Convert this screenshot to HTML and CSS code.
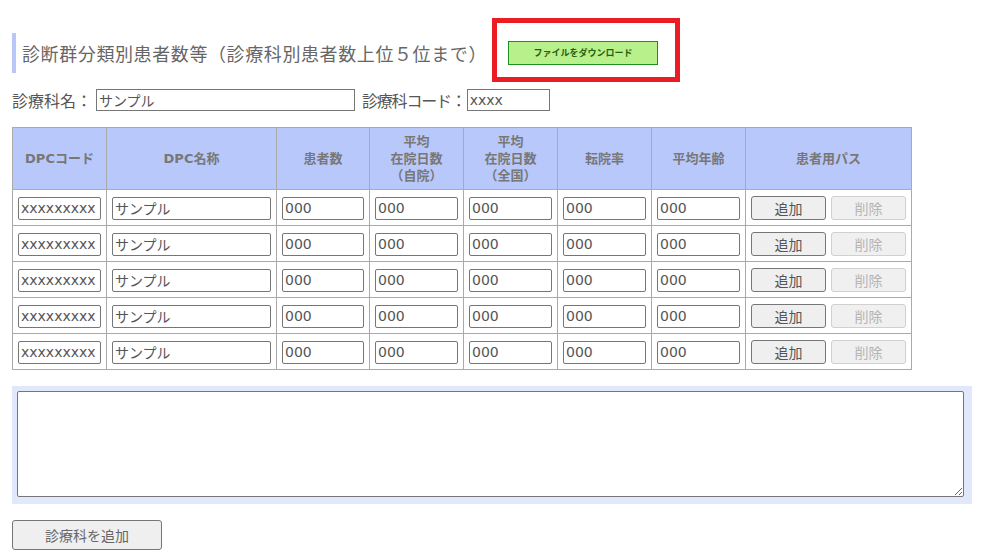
FILE: index.html
```html
<!DOCTYPE html>
<html lang="ja">
<head>
<meta charset="utf-8">
<title>診断群分類別患者数等</title>
<link rel="stylesheet" href="styles.css">
</head>
<body>
<div class="page">
  <div class="title-row">
    <h2 class="title">診断群分類別患者数等（診療科別患者数上位５位まで）</h2>
    <div class="dl-wrap">
      <button class="dl-btn" type="button">ファイルをダウンロード</button>
      <span class="highlight"></span>
    </div>
  </div>

  <div class="meta-row">
    <label class="meta-label">診療科名：</label>
    <input class="inp meta-name" type="text" value="サンプル">
    <label class="meta-label code-label">診療科コード：</label>
    <input class="inp meta-code" type="text" value="xxxx">
  </div>

  <table class="dpc-table">
    <colgroup>
      <col class="c-code"><col class="c-name"><col class="c-num1"><col class="c-num"><col class="c-num"><col class="c-num"><col class="c-num"><col class="c-path">
    </colgroup>
    <thead>
      <tr>
        <th>DPCコード</th>
        <th>DPC名称</th>
        <th>患者数</th>
        <th>平均<br>在院日数<br>（自院）</th>
        <th>平均<br>在院日数<br>（全国）</th>
        <th>転院率</th>
        <th>平均年齢</th>
        <th>患者用パス</th>
      </tr>
    </thead>
    <tbody>
      <tr>
        <td><input class="inp cell-inp" value="xxxxxxxxx"></td>
        <td><input class="inp cell-inp" value="サンプル"></td>
        <td><input class="inp cell-inp" value="000"></td>
        <td><input class="inp cell-inp" value="000"></td>
        <td><input class="inp cell-inp" value="000"></td>
        <td><input class="inp cell-inp" value="000"></td>
        <td><input class="inp cell-inp" value="000"></td>
        <td><div class="btns"><button class="btn" type="button">追加</button><button class="btn" type="button" disabled>削除</button></div></td>
      </tr>
      <tr>
        <td><input class="inp cell-inp" value="xxxxxxxxx"></td>
        <td><input class="inp cell-inp" value="サンプル"></td>
        <td><input class="inp cell-inp" value="000"></td>
        <td><input class="inp cell-inp" value="000"></td>
        <td><input class="inp cell-inp" value="000"></td>
        <td><input class="inp cell-inp" value="000"></td>
        <td><input class="inp cell-inp" value="000"></td>
        <td><div class="btns"><button class="btn" type="button">追加</button><button class="btn" type="button" disabled>削除</button></div></td>
      </tr>
      <tr>
        <td><input class="inp cell-inp" value="xxxxxxxxx"></td>
        <td><input class="inp cell-inp" value="サンプル"></td>
        <td><input class="inp cell-inp" value="000"></td>
        <td><input class="inp cell-inp" value="000"></td>
        <td><input class="inp cell-inp" value="000"></td>
        <td><input class="inp cell-inp" value="000"></td>
        <td><input class="inp cell-inp" value="000"></td>
        <td><div class="btns"><button class="btn" type="button">追加</button><button class="btn" type="button" disabled>削除</button></div></td>
      </tr>
      <tr>
        <td><input class="inp cell-inp" value="xxxxxxxxx"></td>
        <td><input class="inp cell-inp" value="サンプル"></td>
        <td><input class="inp cell-inp" value="000"></td>
        <td><input class="inp cell-inp" value="000"></td>
        <td><input class="inp cell-inp" value="000"></td>
        <td><input class="inp cell-inp" value="000"></td>
        <td><input class="inp cell-inp" value="000"></td>
        <td><div class="btns"><button class="btn" type="button">追加</button><button class="btn" type="button" disabled>削除</button></div></td>
      </tr>
      <tr>
        <td><input class="inp cell-inp" value="xxxxxxxxx"></td>
        <td><input class="inp cell-inp" value="サンプル"></td>
        <td><input class="inp cell-inp" value="000"></td>
        <td><input class="inp cell-inp" value="000"></td>
        <td><input class="inp cell-inp" value="000"></td>
        <td><input class="inp cell-inp" value="000"></td>
        <td><input class="inp cell-inp" value="000"></td>
        <td><div class="btns"><button class="btn" type="button">追加</button><button class="btn" type="button" disabled>削除</button></div></td>
      </tr>
    </tbody>
  </table>

  <div class="note-box">
    <textarea class="note"></textarea>
  </div>

  <button class="add-dept" type="button">診療科を追加</button>
</div>
</body>
</html>
```

FILE: styles.css
```css
* { box-sizing: border-box; }

html, body {
  margin: 0;
  padding: 0;
  background: #fff;
}

body {
  font-family: "DejaVu Sans", "Noto Sans CJK JP", sans-serif;
  color: #555;
}

.page {
  padding: 33px 12px 0 12px;
}

.title-row {
  display: flex;
  align-items: center;
  height: 40px;
}

.title {
  margin: 0;
  height: 40px;
  line-height: 40px;
  border-left: 4px solid #b9c7f8;
  padding-left: 6px;
  font-family: "Noto Sans CJK JP", sans-serif;
  font-weight: normal;
  font-size: 18px;
  letter-spacing: 0.6px;
  color: #666;
  white-space: nowrap;
}

.dl-wrap {
  position: relative;
  margin-left: 21px;
  margin-top: -1px;
}

.dl-btn {
  display: block;
  width: 150px;
  height: 24px;
  padding: 0;
  background: #b8f08c;
  border: 1px solid #1f8f1f;
  border-radius: 0;
  font-family: "Noto Sans CJK JP", sans-serif;
  font-weight: bold;
  font-size: 9px;
  color: #2a5e12;
}

.highlight {
  position: absolute;
  left: -16px;
  top: -23px;
  width: 188px;
  height: 64px;
  border: 5px solid #ec1c24;
  pointer-events: none;
}

.meta-row {
  display: flex;
  align-items: center;
  margin-top: 16px;
  height: 22px;
}

.meta-label {
  font-family: "Noto Sans CJK JP", sans-serif;
  font-size: 16px;
  color: #555;
  margin-right: 4px;
  white-space: nowrap;
}

.code-label {
  margin-left: 7px;
  margin-right: 1px;
  letter-spacing: -1.2px;
}

.inp {
  font-family: "DejaVu Sans", "Noto Sans CJK JP", sans-serif;
  font-size: 14px;
  color: #555;
  border: 1px solid #767676;
  border-radius: 2px;
  padding: 0 2px;
  background: #fff;
  margin: 0;
}

.meta-name {
  width: 259px;
  height: 22px;
  border-radius: 0;
}

.meta-code {
  width: 83px;
  height: 22px;
  border-radius: 0;
}

.dpc-table {
  margin-top: 16px;
  border-collapse: collapse;
  table-layout: fixed;
  width: 899px;
}

.c-code { width: 94px; }
.c-name { width: 170px; }
.c-num1 { width: 93px; }
.c-num  { width: 94px; }
.c-path { width: 166px; }

.dpc-table th,
.dpc-table td {
  border: 1px solid #aaa;
}

.dpc-table th {
  background: #b9c8fa;
  height: 62px;
  padding: 0;
  font-family: "DejaVu Sans", "Noto Sans CJK JP", sans-serif;
  font-size: 13px;
  font-weight: bold;
  line-height: 17px;
  color: #777;
  text-align: center;
  vertical-align: middle;
}

.dpc-table td {
  height: 36px;
  padding: 1px 5px 0 5px;
  vertical-align: middle;
}

.cell-inp {
  display: block;
  width: 100%;
  height: 23px;
}

.btns {
  display: flex;
  gap: 5px;
}

.btn {
  width: 75px;
  height: 24px;
  padding: 0;
  font-family: "Noto Sans CJK JP", sans-serif;
  font-size: 14px;
  color: #555;
  background: #efefef;
  border: 1px solid #767676;
  border-radius: 3px;
}

.btn:disabled {
  color: #b5b5b5;
  background: #f0f0f0;
  border-color: #d0d0d0;
}

.note-box {
  margin-top: 16px;
  width: 960px;
  background: #e2e8fc;
  padding: 5px 8px 7px 5px;
}

.note {
  display: block;
  width: 947px;
  height: 106px;
  margin: 0;
  border: 1px solid #767676;
  border-radius: 2px;
  resize: both;
  font-family: "DejaVu Sans", sans-serif;
}

.add-dept {
  display: block;
  margin-top: 16px;
  width: 150px;
  height: 30px;
  padding: 0;
  font-family: "Noto Sans CJK JP", sans-serif;
  font-size: 14px;
  color: #666;
  background: #efefef;
  border: 1px solid #767676;
  border-radius: 3px;
}
```
